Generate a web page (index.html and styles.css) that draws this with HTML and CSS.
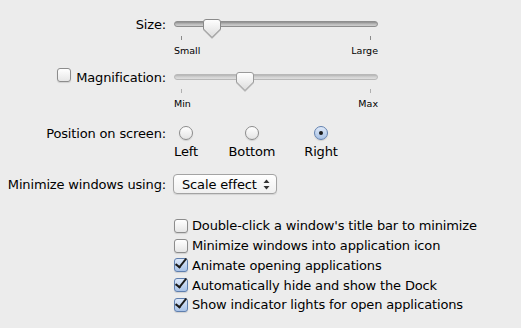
FILE: index.html
```html
<!DOCTYPE html>
<html lang="en">
<head>
  <meta charset="UTF-8">
  <title>Dock</title>
  <link rel="stylesheet" href="styles.css">
</head>
<body>
  <div class="prefs">

    <div class="row slider-row">
      <div class="row-label">Size:</div>
      <div class="control slider">
        <div class="track-wrap">
          <div class="track"></div>
          <svg class="thumb" style="left: 29px" width="18" height="19" viewBox="0 0 18 19">
            <defs>
              <linearGradient id="thumbFill" x1="0" y1="0" x2="0" y2="1">
                <stop offset="0" stop-color="#ffffff"/>
                <stop offset="1" stop-color="#dcdcdc"/>
              </linearGradient>
            </defs>
            <path d="M3 0.5 H15 Q17.5 0.5 17.5 3 V10 L9 18.5 L0.5 10 V3 Q0.5 0.5 3 0.5 Z" fill="url(#thumbFill)" stroke="#8a8a8a"/>
          </svg>
        </div>
        <div class="ticks"><span></span><span></span></div>
        <div class="scale"><span>Small</span><span>Large</span></div>
      </div>
    </div>

    <div class="row slider-row mag-row">
      <div class="row-label">
        <span class="box"></span>
        Magnification:
      </div>
      <div class="control slider dim">
        <div class="track-wrap">
          <div class="track"></div>
          <svg class="thumb" style="left: 62px" width="18" height="19" viewBox="0 0 18 19">
            <path d="M3 0.5 H15 Q17.5 0.5 17.5 3 V10 L9 18.5 L0.5 10 V3 Q0.5 0.5 3 0.5 Z" fill="url(#thumbFill)" stroke="#9a9a9a"/>
          </svg>
        </div>
        <div class="ticks"><span></span><span></span></div>
        <div class="scale"><span>Min</span><span>Max</span></div>
      </div>
    </div>

    <div class="row position-row">
      <div class="row-label">Position on screen:</div>
      <div class="control radios">
        <div class="radio-item left">
          <span class="radio"></span>
          <span class="radio-text">Left</span>
        </div>
        <div class="radio-item bottom">
          <span class="radio"></span>
          <span class="radio-text">Bottom</span>
        </div>
        <div class="radio-item right">
          <span class="radio on"></span>
          <span class="radio-text">Right</span>
        </div>
      </div>
    </div>

    <div class="row popup-row">
      <div class="row-label">Minimize windows using:</div>
      <div class="control popup">
        <span>Scale effect</span>
        <svg class="arrows" width="7" height="11" viewBox="0 0 7 11">
          <path d="M3.5 0.5 L6.5 4 H0.5 Z" fill="#333"/>
          <path d="M3.5 10.5 L6.5 7 H0.5 Z" fill="#333"/>
        </svg>
      </div>
    </div>

    <ul class="checks">
      <li><span class="box"></span>Double-click a window's title bar to minimize</li>
      <li><span class="box"></span>Minimize windows into application icon</li>
      <li><span class="box on"></span>Animate opening applications</li>
      <li><span class="box on"></span>Automatically hide and show the Dock</li>
      <li><span class="box on"></span>Show indicator lights for open applications</li>
    </ul>

  </div>
</body>
</html>
```

FILE: styles.css
```css
body {
  margin: 0;
  background-color: #ececec;
  font-family: 'DejaVu Sans', 'Liberation Sans', sans-serif;
  font-size: 13px;
  letter-spacing: -0.15px;
  color: #000;
}
.prefs {
  padding-top: 13px;
}
.row {
  display: flex;
  align-items: flex-start;
}
.row-label {
  width: 166px;
  flex: none;
  height: 22px;
  display: flex;
  align-items: center;
  justify-content: flex-end;
  white-space: nowrap;
}
.control {
  margin-left: 8px;
}

/* sliders */
.slider {
  width: 204px;
}
.track-wrap {
  position: relative;
  height: 22px;
}
.track {
  position: relative;
  top: 8px;
  height: 4px;
  border: 1px solid #8e8e8e;
  border-radius: 3px;
  background: linear-gradient(#8c8c8c, #b9b9b9 50%, #cfcfcf);
}
.thumb {
  position: absolute;
  top: 6px;
  filter: drop-shadow(0 1px 0.5px rgba(0, 0, 0, 0.18));
}
.ticks {
  display: flex;
  justify-content: space-between;
  padding: 0 7px 0 7px;
  margin-top: 1px;
  height: 4px;
}
.ticks span {
  width: 1px;
  background-color: #8a8a8a;
}
.scale {
  display: flex;
  justify-content: space-between;
  margin-top: 5px;
  font-size: 9.5px;
  letter-spacing: 0;
  line-height: 12px;
}
.mag-row {
  margin-top: 9px;
}
.dim .track {
  border-color: #b8b8b8;
  background: linear-gradient(#b4b4b4, #d2d2d2 50%, #dfdfdf);
}
.dim .ticks span {
  background-color: #b0b0b0;
}
.mag-row .row-label .box {
  margin-right: 5px;
  margin-top: -4px;
}

/* checkboxes */
.box {
  width: 14px;
  height: 14px;
  flex: none;
  box-sizing: border-box;
  border: 1px solid #8c8c8c;
  border-radius: 3px;
  background: linear-gradient(#ffffff, #e6e6e6);
  box-shadow: 0 1px 1px rgba(0, 0, 0, 0.12);
  position: relative;
  display: inline-block;
}
.box.on {
  border-color: #5f7fae;
  background: linear-gradient(#dde8f8, #a9c3e8);
}
.box.on::after {
  content: '';
  position: absolute;
  left: 3px;
  top: -3px;
  width: 4px;
  height: 10px;
  border-right: 2.5px solid #1c1c1c;
  border-bottom: 2.5px solid #1c1c1c;
  transform: rotate(38deg);
}
.checks {
  list-style: none;
  margin: 22px 0 0 174px;
  padding: 0;
}
.checks li {
  display: flex;
  align-items: center;
  gap: 4px;
  height: 19.75px;
  white-space: nowrap;
}

/* radios */
.position-row {
  margin-top: 16px;
}
.position-row .row-label {
  height: 14px;
}
.radios {
  display: flex;
}
.radio-item {
  display: flex;
  flex-direction: column;
  align-items: center;
}
.radio-item.left {
  width: 24px;
}
.radio-item.bottom {
  width: 60px;
  margin-left: 24px;
}
.radio-item.right {
  width: 50px;
  margin-left: 14px;
}
.radio {
  width: 14px;
  height: 14px;
  box-sizing: border-box;
  border: 1px solid #8c8c8c;
  border-radius: 50%;
  background: linear-gradient(#ffffff, #e4e4e4);
  box-shadow: 0 1px 1px rgba(0, 0, 0, 0.12);
  display: flex;
  align-items: center;
  justify-content: center;
}
.radio.on {
  border-color: #6382b0;
  background: linear-gradient(#dfe9f8, #a8c2e6);
}
.radio.on::after {
  content: '';
  width: 4px;
  height: 4px;
  border-radius: 50%;
  background-color: #1a1a1a;
}
.radio-text {
  margin-top: 4px;
  line-height: 16px;
  white-space: nowrap;
}

/* popup */
.popup-row {
  margin-top: 14px;
}
.popup-row .row-label {
  height: 20px;
}
.popup {
  margin-left: 7px;
  width: 104px;
  height: 20px;
  box-sizing: border-box;
  border: 1px solid #a3a3a3;
  border-radius: 4px;
  background: linear-gradient(#ffffff, #f0f0f0);
  box-shadow: 0 1px 1px rgba(0, 0, 0, 0.1);
  display: flex;
  align-items: center;
  justify-content: space-between;
  padding: 0 6px 0 8px;
}
.arrows {
  display: block;
}
```
